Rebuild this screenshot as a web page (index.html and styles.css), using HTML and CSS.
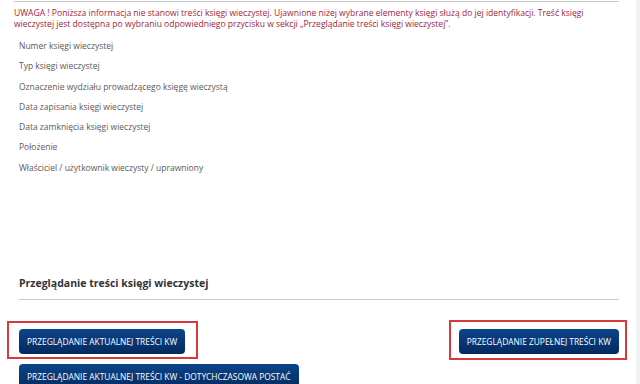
FILE: index.html
```html
<!DOCTYPE html>
<html lang="pl">

<head>
    <meta charset="UTF-8">
    <meta name="viewport" content="width=device-width, initial-scale=1.0">
    <title>Księga wieczysta</title>
    <link rel="stylesheet" href="styles.css">
</head>

<body>
    <div class="page">
        <div class="content">
            <p class="warning">UWAGA ! Poniższa informacja nie stanowi treści księgi wieczystej. Ujawnione niżej wybrane elementy księgi służą do jej identyfikacji. Treść księgi wieczystej jest dostępna po wybraniu odpowiedniego przycisku w sekcji „Przeglądanie treści księgi wieczystej”.</p>

            <ul class="fields">
                <li>Numer księgi wieczystej</li>
                <li>Typ księgi wieczystej</li>
                <li>Oznaczenie wydziału prowadzącego księgę wieczystą</li>
                <li>Data zapisania księgi wieczystej</li>
                <li>Data zamknięcia księgi wieczystej</li>
                <li>Położenie</li>
                <li>Właściciel / użytkownik wieczysty / uprawniony</li>
            </ul>

            <h3 class="section-title">Przeglądanie treści księgi wieczystej</h3>

            <div class="actions">
                <div class="actions-left">
                    <div class="highlight">
                        <button class="btn">PRZEGLĄDANIE AKTUALNEJ TREŚCI KW</button>
                    </div>
                    <button class="btn">PRZEGLĄDANIE AKTUALNEJ TREŚCI KW - DOTYCHCZASOWA POSTAĆ</button>
                </div>
                <div class="highlight highlight-right">
                    <button class="btn">PRZEGLĄDANIE ZUPEŁNEJ TREŚCI KW</button>
                </div>
            </div>
        </div>
        <div class="scroll-strip"></div>
    </div>
</body>

</html>
```

FILE: styles.css
```css
body {
    font-family: 'Open Sans', 'DejaVu Sans', sans-serif;
    background-color: #fff;
    margin: 0;
}

.page {
    display: flex;
    height: 384px;
    overflow: hidden;
}

.content {
    flex: 1;
    padding: 0 17px 0 14px;
}

.scroll-strip {
    width: 4px;
    background-color: #f1f1f3;
}

.warning {
    margin: 1px 0 0;
    padding-top: 6px;
    border-top: 1px solid #c8c8c8;
    color: #a3243b;
    font-size: 8.55px;
    line-height: 10.5px;
}

.fields {
    list-style-type: none;
    margin: 7px 0 0;
    padding: 0 0 0 5px;
}

.fields li {
    height: 20.3px;
    line-height: 20.3px;
    font-size: 8.5px;
    color: #5a5a5a;
}

.section-title {
    margin: 97px 0 0 5px;
    padding-bottom: 8px;
    border-bottom: 1px solid #c9c9c9;
    font-size: 10.5px;
    line-height: 16px;
    font-weight: 700;
    color: #333;
}

.actions {
    display: flex;
    justify-content: space-between;
    align-items: flex-start;
    margin-top: 28px;
    padding-left: 5px;
}

.actions-left {
    display: flex;
    flex-direction: column;
    align-items: flex-start;
    gap: 10px;
}

.btn {
    display: inline-block;
    height: 25px;
    padding: 0 8px;
    background: linear-gradient(#0c458c, #032a5e);
    color: #fff;
    border: none;
    border-radius: 4px;
    font-family: 'Open Sans', 'DejaVu Sans', sans-serif;
    font-size: 8.4px;
    cursor: pointer;
}

.highlight {
    position: relative;
}

.highlight::after {
    content: "";
    position: absolute;
    top: -7px;
    bottom: -5px;
    left: -12px;
    right: -13px;
    border: 2px solid #d8393c;
}

.highlight-right::after {
    top: -8px;
    bottom: -6px;
    left: -10px;
    right: -8px;
}
```
